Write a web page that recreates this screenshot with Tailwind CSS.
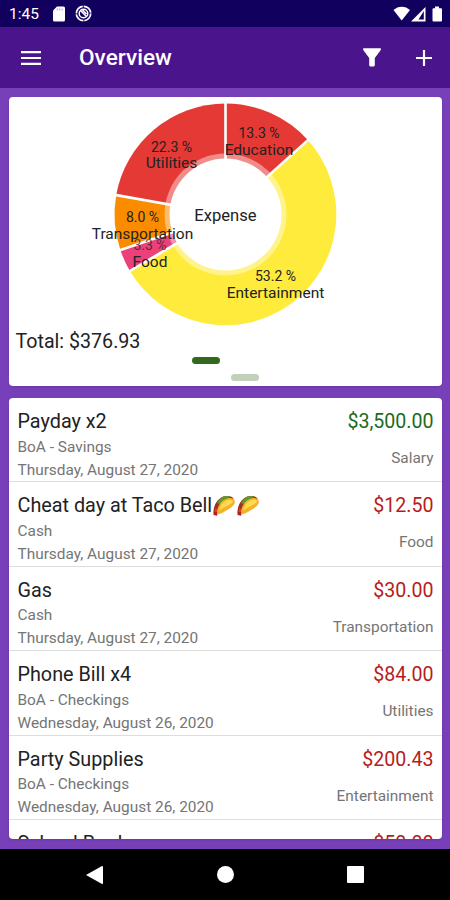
<!DOCTYPE html>
<html lang="en">
<head>
<meta charset="utf-8">
<title>Overview</title>
<script src="https://cdn.jsdelivr.net/npm/@tailwindcss/browser@4"></script>
</head>
<body class="w-[450px] h-[900px] overflow-hidden bg-[#7840b8] font-['Roboto','Liberation_Sans',sans-serif] flex flex-col">
<svg class="hidden">
  <symbol id="taco" viewBox="0 0 24 22">
    <path d="M1 18C1 9 7 1 15 1c4 0 6 1 7 3L5 20z" fill="#a5301c"/>
    <path d="M5 8C8 3 11 1 15 1l4 .8-4 2.200-8 6z" fill="#5d9c2c"/>
    <path d="M2 18l1-4 2 1-1 5z" fill="#e33b25"/>
    <path d="M4.500 20.500C4 13 9 5 16 3.300c4-.8 7.300.7 7.400 3.700.1 4-4.400 6.500-9 9.300-3.500 2-6.500 4-9.900 4.200z" fill="#f2b32a"/>
    <path d="M7 16C8 10 12 6 17 5c3-.5 5 .5 4 2.500C19 10 12 13 7 16z" fill="#ffd94f"/>
    <path d="M1 17.500l3.800.5v3.700l-3.800-.8z" fill="#b51f1b"/>
  </symbol>
</svg>

<header class="shrink-0 text-white">
  <div class="h-[27px] bg-[#12005e] flex items-center">
    <span class="ml-[9px] w-[44px] pt-px text-[15.500px] leading-[27px]">1:45</span>
    <svg class="w-[12px] h-[16px]" viewBox="0 0 12 16"><path d="M4 .5h6.500Q12 .5 12 2v12q0 1.500-1.500 1.500h-9Q0 15.500 0 14V4.500z" fill="#fff"/><path d="M4.300 2.500v2M6.700 2.500v2M9.100 2.500v2" stroke="#a9a2c8" stroke-width="1"/></svg>
    <svg class="ml-[10px] w-[17px] h-[17px]" viewBox="0 0 17 17" fill="none" stroke="#fff"><circle cx="8.500" cy="8.500" r="7.200" stroke-width="1.700" stroke-dasharray="10.300 1"/><circle cx="8.500" cy="8.500" r="4.300" stroke-width="1.500"/><path d="M5.500 5.500l6 6M7.500 5l4 4" stroke-width="1.600"/></svg>
    <svg class="ml-auto mr-[7px] w-[50px] h-[16px]" viewBox="0 0 50 16"><path d="M.5 4C5-.5 12.500-.5 17 4L8.700 14.500z" fill="#fff"/><path d="M18 15.500L32.500 1v14.500z" fill="#fff"/><path d="M25.500 13.500L30.800 5v8.500z" fill="#12005e"/><path d="M42 .5h4v1.700h2q1 0 1 1v11.300q0 1-1 1h-7.500q-1 0-1-1V3.200q0-1 1-1H42z" fill="#fff"/></svg>
  </div>
  <div class="h-[61px] bg-[#4a148c] flex items-center">
    <svg class="ml-[21px] w-[20px] h-[14px]" viewBox="0 0 20 14"><path d="M0 1.200h20M0 7h20M0 12.800h20" stroke="#fff" stroke-width="2.200"/></svg>
    <h1 class="ml-[38px] pt-px text-[22.600px] leading-[30px] font-medium">Overview</h1>
    <svg class="ml-auto w-[18px] h-[19px]" viewBox="0 0 18 19"><path d="M.2.3h17.600V2L11.800 10V17q0 1.500-1.500 1.500H7.700Q6.200 18.500 6.200 17V10L.2 2z" fill="#fff"/></svg>
    <svg class="ml-[35px] mr-[18px] w-[16px] h-[16px]" viewBox="0 0 16 16"><path d="M8 0v16M0 8h16" stroke="#fff" stroke-width="2.200"/></svg>
  </div>
</header>

<main class="grow flex flex-col gap-[12px] px-[8.500px] pt-[9px] pb-[9px] min-h-0">
  <section class="h-[289px] shrink-0 bg-white rounded-[4px] flex flex-col shadow">
    <svg class="w-[433px] h-[230px] shrink-0" viewBox="9 97 433 230" font-size="14" fill="#222">
      <path d="M225.500 214.500V103.500A111 111 0 0 1 307.900 140.100z" fill="#e53935"/>
      <path d="M225.500 214.500L307.900 140.100A111 111 0 1 1 129.900 271z" fill="#ffeb3b"/>
      <path d="M225.500 214.500L129.900 271A111 111 0 0 1 120.400 250.100z" fill="#ec407a"/>
      <path d="M225.500 214.500L120.400 250.100A111 111 0 0 1 116.200 195.100z" fill="#fb8c00"/>
      <path d="M225.500 214.500L116.200 195.100A111 111 0 0 1 225.500 103.500z" fill="#e53935"/>
      <path d="M225.500 214.500V102M225.500 214.500L309 139.100M225.500 214.500L129 271.500M225.500 214.500L119 250.600M225.500 214.500L115 194.900" stroke="#fff" stroke-width="2.600"/>
      <circle cx="225.500" cy="214.500" r="61" fill="#fff" fill-opacity=".42"/>
      <circle cx="225.500" cy="214.500" r="56" fill="#fff"/>
      <g text-anchor="middle">
        <text x="225.500" y="220.500" font-size="16.600">Expense</text>
        <text x="259" y="138">13.3 %</text><text x="259" y="154.500" font-size="15.500">Education</text>
        <text x="171.500" y="151.500">22.3 %</text><text x="171.500" y="168" font-size="15.500">Utilities</text>
        <text x="142.500" y="222">8.0 %</text><text x="142.500" y="238.500" font-size="15.500">Transportation</text>
        <text x="150" y="250" fill-opacity=".75">3.3 %</text><text x="150" y="267" font-size="15.500">Food</text>
        <text x="275.500" y="281">53.2 %</text><text x="275.500" y="298" font-size="15.500">Entertainment</text>
      </g>
    </svg>
    <p class="pl-[7px] pt-px h-[28px] leading-[28px] text-[19.650px] text-[#222]">Total: $376.93</p>
    <div class="ml-[183.500px] mt-[2px] flex gap-[11px]">
      <i class="w-[28px] h-[7px] rounded-full bg-[#33691e]"></i>
      <i class="w-[28px] h-[7px] mt-[17px] rounded-full bg-[#c2d0bc]"></i>
    </div>
  </section>

  <section id="list" class="h-[441px] shrink-0 bg-white rounded-[4px] overflow-hidden shadow"></section>
</main>

<nav class="h-[51px] shrink-0 bg-black flex items-center">
  <svg class="ml-[86px] w-[17px] h-[18px]" viewBox="0 0 17 18"><path d="M0 9L16 0q1 0 1 1v16q0 1-1 1z" fill="#fff"/></svg>
  <i class="ml-[114px] size-[17px] rounded-full bg-white"></i>
  <i class="ml-[113px] size-[17px] rounded-[1px] bg-white"></i>
</nav>

<script>
const taco = '<svg class="w-[24px] h-[21px] inline-block align-[-4px]"><use href="#taco"/></svg>';
const rows = [
  ['Payday x2', 'BoA - Savings', 'Thursday, August 27, 2020', '$3,500.00', 'Salary'],
  ['Cheat day at Taco Bell' + taco + taco, 'Cash', 'Thursday, August 27, 2020', '$12.50', 'Food'],
  ['Gas', 'Cash', 'Thursday, August 27, 2020', '$30.00', 'Transportation'],
  ['Phone Bill x4', 'BoA - Checkings', 'Wednesday, August 26, 2020', '$84.00', 'Utilities'],
  ['Party Supplies', 'BoA - Checkings', 'Wednesday, August 26, 2020', '$200.43', 'Entertainment'],
  ['School Books', '', '', '$50.00', ''],
];
document.getElementById('list').innerHTML = rows.map((r, i) => `
  <article class="h-[84.400px] border-b border-[#dedede] pl-[9px] pr-[8px] pt-[10px] flex justify-between">
    <div class="text-[15.400px] leading-[23px] text-[#757575] whitespace-nowrap">
      <h2 class="h-[27.500px] leading-[28px] text-[19.800px] text-[#222]">${r[0]}</h2>
      <p>${r[1]}</p><p>${r[2]}</p>
    </div>
    <div class="text-right text-[15.400px] text-[#757575]">
      <p class="h-[28px] leading-[28px] text-[19.600px] ${i ? 'text-[#b71c1c]' : 'text-[#1b6b20]'}">${r[3]}</p>
      <p class="mt-[10px] leading-[24px]">${r[4]}</p>
    </div>
  </article>`).join('');
</script>
</body>
</html>
